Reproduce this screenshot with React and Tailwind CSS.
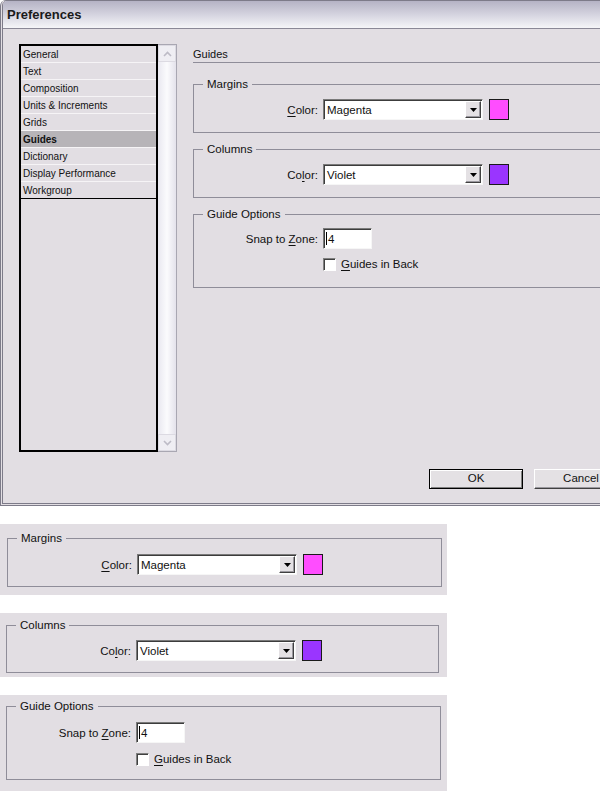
import React from "react";

const BG = "bg-[#e2dee3]";

const categories = [
  "General",
  "Text",
  "Composition",
  "Units & Increments",
  "Grids",
  "Guides",
  "Dictionary",
  "Display Performance",
  "Workgroup",
];

// label with one underlined access-key letter
const Mnemonic = ({ text, at }) => (
  <span>
    {text.slice(0, at)}
    <span className="underline underline-offset-[2px] decoration-[1px]">{text[at]}</span>
    {text.slice(at + 1)}
  </span>
);

const GroupBox = ({ title, className, children }) => (
  <div className={`relative border border-[#8f8d99] ${className}`}>
    <span className={`absolute -top-[8px] left-[9px] px-[4px] leading-[14px] text-[11.5px] text-[#111] ${BG}`}>
      {title}
    </span>
    {children}
  </div>
);

const Label = ({ children }) => (
  <div className="w-[129px] shrink-0 pr-[5px] text-right text-[11.5px] leading-[14px] text-[#111]">
    {children}
  </div>
);

const Select = ({ value }) => (
  <div className="flex h-[21px] w-[160px] items-center border border-[#7a7a7a] border-b-[#f6f6f6] border-r-[#f6f6f6] bg-white shadow-[inset_1px_1px_0_#3c3c3c]">
    <span className="pl-[3px] text-[11.5px] leading-[14px] text-[#111]">{value}</span>
    <div className="ml-auto mr-[1px] flex h-[17px] w-[16px] items-center justify-center border border-white border-b-[#404040] border-r-[#404040] bg-[#e4e1e4] shadow-[inset_-1px_-1px_0_#9a989e]">
      <svg width="7" height="4" viewBox="0 0 7 4">
        <polygon points="0,0 7,0 3.5,4" fill="#000" />
      </svg>
    </div>
  </div>
);

const Swatch = ({ color }) => (
  <div className={`ml-[6px] h-[21px] w-[20px] border border-[#1a1a1a] ${color}`} />
);

const ColorRow = ({ label, value, color }) => (
  <div className="flex items-center">
    <Label>{label}</Label>
    <Select value={value} />
    <Swatch color={color} />
  </div>
);

const SnapRow = () => (
  <div className="flex items-center">
    <Label>
      Snap to <Mnemonic text="Zone:" at={0} />
    </Label>
    <div className="flex h-[21px] w-[49px] items-center border border-[#7a7a7a] border-b-[#f6f6f6] border-r-[#f6f6f6] bg-white shadow-[inset_1px_1px_0_#3c3c3c]">
      <span className="ml-[2px] h-[13px] w-px bg-black" />
      <span className="pl-px text-[11.5px] leading-[14px] text-[#111]">4</span>
    </div>
  </div>
);

const CheckRow = ({ className }) => (
  <div className={`flex items-center pl-[129px] ${className}`}>
    <div className="h-[13px] w-[13px] border border-[#808080] border-b-white border-r-white bg-white shadow-[inset_1px_1px_0_#404040]" />
    <span className="pl-[5px] text-[11.5px] leading-[14px] text-[#111]">
      <Mnemonic text="Guides in Back" at={0} />
    </span>
  </div>
);

const ScrollButton = ({ up }) => (
  <div className="flex h-[17px] items-center justify-center border border-[#dcdae2] bg-[#efeef3]">
    <svg width="9" height="6" viewBox="0 0 9 6">
      <polyline
        points={up ? "1,5 4.5,1.5 8,5" : "1,1 4.5,4.5 8,1"}
        fill="none"
        stroke="#bdbbc6"
        strokeWidth="1.6"
      />
    </svg>
  </div>
);

const CategoryList = () => (
  <div className="flex h-[408px] w-[158px] shrink-0">
    <div className="flex w-[139px] flex-col border-2 border-black">
      {categories.map((name, i) => (
        <div
          key={name}
          className={`h-[17px] border-b pl-[2px] text-[10px] leading-[17px] text-[#111] ${
            i === categories.length - 1 ? "border-black" : "border-[#f6f4f6]"
          } ${name === "Guides" ? "bg-[#b7b4b8] font-bold" : ""}`}
        >
          {name}
        </div>
      ))}
    </div>
    <div className="flex w-[19px] flex-col justify-between border-y border-r border-[#a9a7b2] bg-linear-to-r from-[#e9e8f0] via-[#fbfbfd] to-[#e4e2eb]">
      <ScrollButton up />
      <ScrollButton />
    </div>
  </div>
);

const App = () => {
  return (
    <div className="h-[791px] w-[600px] overflow-hidden bg-white font-['Liberation_Sans',Arial,sans-serif]">
      {/* Preferences window */}
      <div className={`flex h-[506px] w-[650px] flex-col rounded-tl-[6px] border-t border-l-[3px] border-b-[3px] border-double border-[#7d7b89] ${BG}`}>
        <div className="flex h-[28px] items-center rounded-tl-[4px] border-b border-[#8a8896] bg-linear-to-b from-[#b5b3c5] via-[#d8d7e2] via-55% to-[#f5f5f8] pl-[4px]">
          <span className="text-[13px] font-bold text-[#1a1a1a]">Preferences</span>
        </div>

        <div className="flex h-[474px] pl-[16px] pt-[15px]">
          <CategoryList />

          <div className="ml-[16px] flex w-[445px] flex-col">
            <div className="mt-[2px] h-[17px] border-b border-[#8f8d99] text-[11px] leading-[16px] text-[#111]">
              Guides
            </div>

            <GroupBox title="Margins" className="mt-[21px] h-[49px] pt-[14px]">
              <ColorRow label={<Mnemonic text="Color:" at={0} />} value="Magenta" color="bg-[#ff4dff]" />
            </GroupBox>

            <GroupBox title="Columns" className="mt-[16px] h-[49px] pt-[14px]">
              <ColorRow label={<Mnemonic text="Color:" at={2} />} value="Violet" color="bg-[#9a35ff]" />
            </GroupBox>

            <GroupBox title="Guide Options" className="mt-[16px] h-[74px] pt-[13px]">
              <SnapRow />
              <CheckRow className="mt-[8px]" />
            </GroupBox>

            <div className="mb-[14px] mt-auto flex justify-end gap-[11px] pr-[10px]">
              <button className="h-[20px] w-[94px] border border-black bg-[#e4e1e4] text-[11.5px] text-[#111] shadow-[inset_1px_1px_0_#fff,inset_-1px_-1px_0_#808080]">
                OK
              </button>
              <button className="h-[20px] w-[94px] border border-white border-b-[#404040] border-r-[#404040] bg-[#e4e1e4] text-[11.5px] text-[#111] shadow-[inset_-1px_-1px_0_#9a989e]">
                Cancel
              </button>
            </div>
          </div>
        </div>
      </div>

      {/* Detail panels */}
      <div className={`mt-[18px] h-[71px] w-[447px] pl-[7px] pt-[14px] ${BG}`}>
        <GroupBox title="Margins" className="h-[49px] w-[435px] pt-[15px]">
          <ColorRow label={<Mnemonic text="Color:" at={0} />} value="Magenta" color="bg-[#ff4dff]" />
        </GroupBox>
      </div>

      <div className={`mt-[18px] h-[64px] w-[447px] pl-[6px] pt-[12px] ${BG}`}>
        <GroupBox title="Columns" className="h-[48px] w-[433px] pt-[14px]">
          <ColorRow label={<Mnemonic text="Color:" at={2} />} value="Violet" color="bg-[#9a35ff]" />
        </GroupBox>
      </div>

      <div className={`mt-[18px] h-[96px] w-[447px] pl-[6px] pt-[11px] ${BG}`}>
        <GroupBox title="Guide Options" className="h-[74px] w-[435px] pt-[15px]">
          <SnapRow />
          <CheckRow className="mt-[9px]" />
        </GroupBox>
      </div>
    </div>
  );
};

export default App;
